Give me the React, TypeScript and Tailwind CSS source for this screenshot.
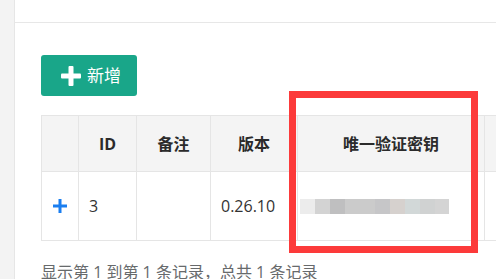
import React from 'react';

const cols = [
  { key: 'expand', label: '', width: 'w-[37px]' },
  { key: 'id', label: 'ID', width: 'w-[58px]' },
  { key: 'note', label: '备注', width: 'w-[74px]' },
  { key: 'ver', label: '版本', width: 'w-[87px]' },
  { key: 'key', label: '唯一验证密钥', width: 'w-[187px]' },
  { key: 'more', label: '', width: 'w-[120px]' },
];

const mosaic = [
  { w: 'w-[15px]', c: 'bg-[#ececec]' },
  { w: 'w-[15px]', c: 'bg-[#d3d3d3]' },
  { w: 'w-[15px]', c: 'bg-[#bfbfc0]' },
  { w: 'w-[30px]', c: 'bg-[#cbcbcb]' },
  { w: 'w-[15px]', c: 'bg-[#c6c6c8]' },
  { w: 'w-[15px]', c: 'bg-[#d6d1ce]' },
  { w: 'w-[15px]', c: 'bg-[#d2d8d8]' },
  { w: 'w-[15px]', c: 'bg-[#d0d2d2]' },
  { w: 'w-[14px]', c: 'bg-[#d4d4d4]' },
];

const App = () => {
  return (
    <div
      className="relative flex h-[279px] w-[496px] overflow-hidden bg-white text-[#333]"
      style={{ fontFamily: '"Open Sans", "Noto Sans CJK SC", sans-serif' }}
    >
      <div className="w-[15px] shrink-0 border-r border-[#e6e6e6] bg-[#f3f3f3]" />

      <div className="flex-1 overflow-hidden">
        <div className="flex h-[23px] items-start border-b border-[#e7e7e7] pl-[21px]">
          <div className="-mt-[19px] text-[16px] leading-[20px] text-[#555]">基础 &nbsp; 版本列表</div>
        </div>

        <div className="pl-[26px]">
          <button className="mt-[32px] flex h-[41px] w-[96px] items-center gap-[6px] rounded-[3px] bg-[#19a689] pl-[20px] text-[17px] text-white">
            <svg width="20" height="20" viewBox="0 0 20 20">
              <rect x="7.5" y="0" width="5" height="20" rx="1" fill="#fff" />
              <rect x="0" y="7.5" width="20" height="5" rx="1" fill="#fff" />
            </svg>
            新增
          </button>

          <table className="mt-[19px] w-[563px] table-fixed border-collapse text-[16px]">
            <thead>
              <tr className="h-[56px] bg-[#f4f4f4]">
                {cols.map((c) => (
                  <th key={c.key} className={`${c.width} border border-[#e5e5e5] text-center font-bold text-[#2b2b2b]`}>
                    {c.label}
                  </th>
                ))}
              </tr>
            </thead>
            <tbody>
              <tr className="h-[69px]">
                <td className="border border-[#e5e5e5]">
                  <div className="flex justify-center">
                    <svg width="14" height="14" viewBox="0 0 14 14">
                      <rect x="5.5" y="0" width="3" height="14" fill="#1a7ef0" />
                      <rect x="0" y="5.5" width="14" height="3" fill="#1a7ef0" />
                    </svg>
                  </div>
                </td>
                <td className="border border-[#e5e5e5] pl-[10px]">3</td>
                <td className="border border-[#e5e5e5]" />
                <td className="border border-[#e5e5e5] pl-[10px]">0.26.10</td>
                <td className="border border-[#e5e5e5] pl-[2px]">
                  <div className="flex h-[15px] blur-[0.6px]">
                    {mosaic.map((m, i) => (
                      <div key={i} className={`${m.w} ${m.c}`} />
                    ))}
                  </div>
                </td>
                <td className="border border-[#e5e5e5]" />
              </tr>
            </tbody>
          </table>

          <div className="mt-[21px] text-[16px] leading-[20px] text-[#676a6c]">
            显示第 1 到第 1 条记录，总共 1 条记录
          </div>
        </div>
      </div>

      <div className="absolute left-[289px] top-[91px] h-[162px] w-[189px] border-[7px] border-[#fc3a3a]" />
    </div>
  );
};

export default App;
